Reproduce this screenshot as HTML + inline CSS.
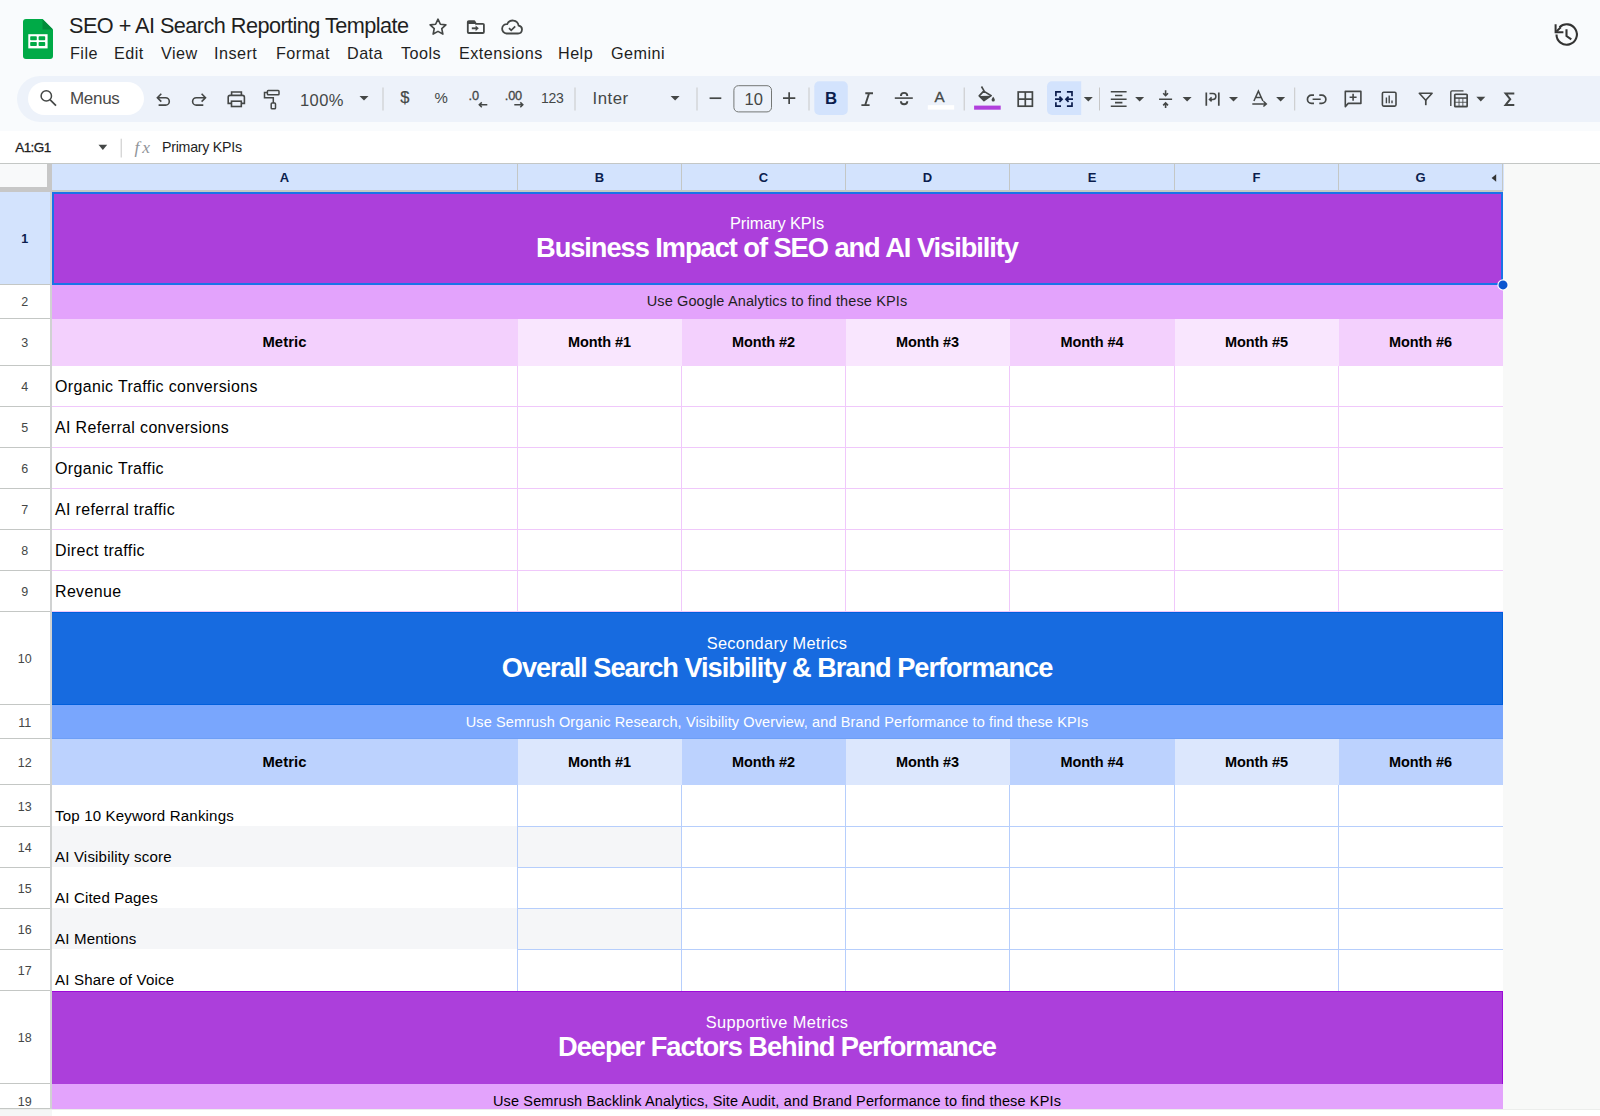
<!DOCTYPE html>
<html><head><meta charset="utf-8"><style>
html,body{margin:0;padding:0}
body{width:1600px;height:1116px;overflow:hidden;position:relative;background:#f8f9fa;font-family:'Liberation Sans', sans-serif}
.t{position:absolute;white-space:nowrap;line-height:1}
.r{position:absolute}
</style></head><body>
<div class="r" style="left:0px;top:0px;width:1600px;height:131px;background:#f9fbfd;"></div><svg class="r" style="left:23px;top:19px" width="30" height="40" viewBox="0 0 30 40">
<path d="M3 0 H19.5 L30 10.5 V37 A3 3 0 0 1 27 40 H3 A3 3 0 0 1 0 37 V3 A3 3 0 0 1 3 0Z" fill="#00aa47"/>
<path d="M19.5 0 L30 10.5 H19.5Z" fill="#008c3a"/>
<rect x="5.3" y="15.2" width="19.3" height="14.2" fill="#fff"/>
<rect x="7.2" y="17.3" width="6.6" height="4" rx="0.8" fill="#00aa47"/>
<rect x="15.6" y="17.3" width="6.6" height="4" rx="0.8" fill="#00aa47"/>
<rect x="7.2" y="23" width="6.6" height="4" rx="0.8" fill="#00aa47"/>
<rect x="15.6" y="23" width="6.6" height="4" rx="0.8" fill="#00aa47"/>
</svg><div class="t" style="left:69px;top:15.36px;font-size:21.7px;color:#1f1f1f;font-weight:normal;letter-spacing:-0.55px;">SEO + AI Search Reporting Template</div><svg class="r" style="left:427px;top:16px" width="22" height="22" viewBox="0 0 24 24"><path d="M12 3.5l2.6 5.5 6 .7-4.5 4.1 1.2 5.9L12 16.8l-5.3 2.9 1.2-5.9L3.4 9.7l6-.7z" fill="none" stroke="#444746" stroke-width="1.8" stroke-linejoin="round"/></svg><svg class="r" style="left:464px;top:16px" width="24" height="22" viewBox="0 0 24 22"><path d="M3.8 6.1A1 1 0 0 1 4.8 5.1H10.2L12 7.9H18.9A1 1 0 0 1 19.9 8.9V16A1 1 0 0 1 18.9 17H4.8A1 1 0 0 1 3.8 16Z" fill="none" stroke="#444746" stroke-width="1.8" stroke-linejoin="round"/><path d="M3.8 5.1H10.2L12 7.9H3.8Z" fill="#444746"/><path d="M7.8 12.3H12.8" stroke="#444746" stroke-width="1.9"/><path d="M11.6 9.4L14.8 12.3L11.6 15.2Z" fill="#444746"/></svg><svg class="r" style="left:500px;top:16px" width="24" height="22" viewBox="0 0 24 22"><path d="M6.5 17.5H18a4 4 0 0 0 .6-7.95A6 6 0 0 0 7.2 8.1 4.7 4.7 0 0 0 6.5 17.5Z" fill="none" stroke="#444746" stroke-width="1.8"/><path d="M9 12.2l2.2 2.2 4-4" fill="none" stroke="#444746" stroke-width="1.7"/></svg><svg class="r" style="left:1553px;top:21px" width="27" height="27" viewBox="0 0 27 27"><path d="M3.5 13.5A10.2 10.2 0 1 0 6.5 6.3" fill="none" stroke="#333" stroke-width="2.1"/><path d="M2.6 3.2V11.3H10.4" fill="none" stroke="#333" stroke-width="2"/><path d="M3.4 10.5L7.8 6.3" stroke="#333" stroke-width="2"/><path d="M13.5 8.2V15L18.3 18.3" fill="none" stroke="#333" stroke-width="2.1"/></svg><div class="t" style="left:70px;top:45.03px;font-size:16.2px;color:#1f1f1f;font-weight:normal;letter-spacing:0.45px;">File</div><div class="t" style="left:114px;top:45.03px;font-size:16.2px;color:#1f1f1f;font-weight:normal;letter-spacing:0.45px;">Edit</div><div class="t" style="left:161px;top:45.03px;font-size:16.2px;color:#1f1f1f;font-weight:normal;letter-spacing:0.45px;">View</div><div class="t" style="left:214px;top:45.03px;font-size:16.2px;color:#1f1f1f;font-weight:normal;letter-spacing:0.45px;">Insert</div><div class="t" style="left:276px;top:45.03px;font-size:16.2px;color:#1f1f1f;font-weight:normal;letter-spacing:0.45px;">Format</div><div class="t" style="left:347px;top:45.03px;font-size:16.2px;color:#1f1f1f;font-weight:normal;letter-spacing:0.45px;">Data</div><div class="t" style="left:401px;top:45.03px;font-size:16.2px;color:#1f1f1f;font-weight:normal;letter-spacing:0.45px;">Tools</div><div class="t" style="left:459px;top:45.03px;font-size:16.2px;color:#1f1f1f;font-weight:normal;letter-spacing:0.45px;">Extensions</div><div class="t" style="left:558px;top:45.03px;font-size:16.2px;color:#1f1f1f;font-weight:normal;letter-spacing:0.45px;">Help</div><div class="t" style="left:611px;top:45.03px;font-size:16.2px;color:#1f1f1f;font-weight:normal;letter-spacing:0.45px;">Gemini</div><div class="r" style="left:17px;top:76px;width:1700px;height:46px;background:#edf2fa;border-radius:23px;"></div><div class="r" style="left:28px;top:82px;width:116px;height:33px;background:#ffffff;border-radius:17px;"></div><svg class="r" style="left:0;top:0" width="1600" height="131" viewBox="0 0 1600 131"><circle cx="46.3" cy="95.9" r="5.2" fill="none" stroke="#444746" stroke-width="1.5"/><path d="M50 99.7L56 105.6" stroke="#444746" stroke-width="1.7"/><path d="M161.3 93.8L157.4 97.7L161.3 101.6M157.6 97.7H165.6A3.7 3.7 0 0 1 165.6 105.1H158.6" fill="none" stroke="#444746" stroke-width="1.6"/><path d="M201.6 93.8L205.5 97.7L201.6 101.6M205.3 97.7H196.3A3.7 3.7 0 0 0 196.3 105.1H203.3" fill="none" stroke="#444746" stroke-width="1.6"/><path d="M231.6 95.2V92H241.4V95.2" fill="none" stroke="#444746" stroke-width="1.6"/><path d="M231.4 103.4H228.2V97.3A1.9 1.9 0 0 1 230.1 95.4H242.5A1.9 1.9 0 0 1 244.4 97.3V103.4H241.2" fill="none" stroke="#444746" stroke-width="1.6"/><rect x="231.5" y="101.2" width="9.8" height="5.3" fill="none" stroke="#444746" stroke-width="1.6"/><rect x="267.4" y="90.6" width="11.6" height="4.2" rx="0.8" fill="none" stroke="#444746" stroke-width="1.5"/><path d="M267.2 92.6H264.5V97.8H273.3V102.9" fill="none" stroke="#444746" stroke-width="1.5"/><rect x="271.2" y="103" width="4.3" height="5.8" rx="0.9" fill="none" stroke="#444746" stroke-width="1.5"/><path d="M359.5 96H368.5L364.0 100.6Z" fill="#444746"/><rect x="382.5" y="87.5" width="1" height="23" fill="#c7c7c7"/><rect x="574.5" y="87.5" width="1" height="23" fill="#c7c7c7"/><path d="M670.6 96H679.6L675.1 100.6Z" fill="#444746"/><rect x="696.5" y="87.5" width="1" height="23" fill="#c7c7c7"/><path d="M709.6 98.2H721.3" stroke="#444746" stroke-width="1.7"/><rect x="733.9" y="85.7" width="37.6" height="26.2" rx="4.5" fill="none" stroke="#747775" stroke-width="1"/><path d="M783 98.2H795.3M789.15 92.3V104.1" stroke="#444746" stroke-width="1.7"/><rect x="808.5" y="87.5" width="1" height="23" fill="#c7c7c7"/><rect x="814.3" y="81.3" width="33.5" height="33.7" rx="5" fill="#d3e3fd"/><path d="M865.3 93.3H873M861.4 105.1H869.6M869 93.5L865.3 104.8" fill="none" stroke="#444746" stroke-width="1.9"/><path d="M894.8 98.1H912.8" stroke="#444746" stroke-width="1.6"/><path d="M900.9 95.9A3.2 3 0 0 1 907.3 95.9M900.9 101.2A3.2 3.1 0 0 0 907.3 101.2" fill="none" stroke="#444746" stroke-width="1.9"/><rect x="927.8" y="105.2" width="26.4" height="4.4" fill="#ffffff"/><rect x="963.7" y="87.5" width="1" height="23" fill="#c7c7c7"/><path d="M981.5 86.5L984.2 91.1" stroke="#444746" stroke-width="1.6"/><path d="M979.2 95.9L983.7 91.1L991.2 95.7L984 100.6Z" fill="none" stroke="#444746" stroke-width="1.6" stroke-linejoin="round"/><path d="M979.2 95.9L991.2 95.7L984 100.6Z" fill="#444746"/><path d="M993.2 96.8C992 98.5 991.6 99.2 991.6 99.9A1.6 1.6 0 0 0 994.8 99.9C994.8 99.2 994.4 98.5 993.2 96.8Z" fill="#444746"/><rect x="974.1" y="105.6" width="26.6" height="4.1" fill="#b03fdc"/><rect x="1018.2" y="92" width="14.2" height="14.2" fill="none" stroke="#444746" stroke-width="1.7"/><path d="M1025.3 92V106.2M1018.2 99.1H1032.4" stroke="#444746" stroke-width="1.7"/><path d="M1052 81.3H1081.2V115H1052A5 5 0 0 1 1047 110V86.3A5 5 0 0 1 1052 81.3Z" fill="#d3e3fd"/><path d="M1061 91.9H1055.9V96.2M1055.9 102.2V106.2H1061M1066.9 91.9H1072V96.2M1072 102.2V106.2H1066.9" fill="none" stroke="#0b1d4d" stroke-width="1.7"/><path d="M1055 99.2H1061.8M1059.4 96.6L1062 99.2L1059.4 101.8M1073 99.2H1066.2M1068.6 96.6L1066 99.2L1068.6 101.8" fill="none" stroke="#0b1d4d" stroke-width="1.8"/><path d="M1083.8 97H1092.8L1088.3 101.6Z" fill="#444746"/><rect x="1099.0" y="87.5" width="1" height="23" fill="#c7c7c7"/><path d="M1110.8 91.7H1126.6M1115 95.5H1122.4M1110.8 99.2H1126.6M1115 102.6H1122.4M1110.8 106.2H1126.6" stroke="#444746" stroke-width="1.6"/><path d="M1135.1 97H1144.1L1139.6 101.6Z" fill="#444746"/><path d="M1159.1 99.3H1172.1M1165.6 90.2V95.6M1163.2 93.2L1165.6 95.7L1168 93.2M1165.6 108V102.9M1163.2 105.4L1165.6 102.9L1168 105.4" fill="none" stroke="#444746" stroke-width="1.6"/><path d="M1182.6 97H1191.6L1187.1 101.6Z" fill="#444746"/><path d="M1206.3 92.4V105.8M1218.8 92.4V105.8" stroke="#444746" stroke-width="1.7"/><path d="M1209.5 93.6H1213A2.9 2.9 0 0 1 1213 99.4H1209.8M1211.6 97.4L1209.5 99.4L1211.6 101.4" fill="none" stroke="#444746" stroke-width="1.5"/><path d="M1229 97H1238L1233.5 101.6Z" fill="#444746"/><path d="M1253.9 101L1258.4 91.1L1262.9 101M1255.5 97.6H1261.3" fill="none" stroke="#444746" stroke-width="1.5"/><path d="M1252.3 103.9H1266.2M1263.4 101.3L1266.3 103.9L1263.4 106.5" fill="none" stroke="#444746" stroke-width="1.5"/><path d="M1276.1 97H1285.1L1280.6 101.6Z" fill="#444746"/><rect x="1294.2" y="87.5" width="1" height="23" fill="#c7c7c7"/><path d="M1314 95.2H1311.5A4.05 4.05 0 0 0 1311.5 103.3H1314M1319.3 95.2H1321.8A4.05 4.05 0 0 1 1321.8 103.3H1319.3M1312.6 99.25H1320.7" fill="none" stroke="#444746" stroke-width="1.7"/><path d="M1345.3 106.6V91.4H1360.9V103.4H1348.2Z" fill="none" stroke="#444746" stroke-width="1.6" stroke-linejoin="round"/><path d="M1353.1 93.7V100.7M1349.6 97.2H1356.6" stroke="#444746" stroke-width="1.6"/><rect x="1382.4" y="92.3" width="13.6" height="13.8" rx="1.3" fill="none" stroke="#444746" stroke-width="1.6"/><path d="M1386.4 97.6V103.2M1389.2 95.4V103.2M1392 100.4V103.2" stroke="#444746" stroke-width="1.4"/><path d="M1419.3 93.3H1432.1L1425.7 100.3Z" fill="none" stroke="#444746" stroke-width="1.6" stroke-linejoin="round"/><path d="M1425.8 99.5V105.2" stroke="#444746" stroke-width="1.7"/><path d="M1450.8 106V92.1A1.3 1.3 0 0 1 1452 90.9H1463.5" fill="none" stroke="#444746" stroke-width="1.4"/><rect x="1453.9" y="93.4" width="14.1" height="14.1" rx="1.6" fill="#444746"/><rect x="1455.6" y="95.1" width="10.7" height="2.2" fill="#edf2fa"/><rect x="1455.6" y="98.8" width="3" height="3" fill="#edf2fa"/><rect x="1455.6" y="102.65" width="3" height="3" fill="#edf2fa"/><rect x="1459.45" y="98.8" width="3" height="3" fill="#edf2fa"/><rect x="1459.45" y="102.65" width="3" height="3" fill="#edf2fa"/><rect x="1463.3" y="98.8" width="3" height="3" fill="#edf2fa"/><rect x="1463.3" y="102.65" width="3" height="3" fill="#edf2fa"/><path d="M1476.3 96.8H1485.3L1480.8 101.39999999999999Z" fill="#444746"/><path d="M1514.3 93.4H1505.6L1510.2 99.2L1505.6 104.9H1514.3" fill="none" stroke="#444746" stroke-width="2"/></svg><div class="t" style="left:70px;top:90.35px;font-size:17px;color:#4a4a4a;font-weight:normal;letter-spacing:-0.3px;">Menus</div><div class="t" style="left:300px;top:91.57px;font-size:16.5px;color:#444746;font-weight:normal;letter-spacing:0.4px;">100%</div><div class="t" style="left:400.3px;top:89.37px;font-size:16.5px;color:#444746;font-weight:normal;letter-spacing:0px;-webkit-text-stroke:0.2px #444746;">$</div><div class="t" style="left:434.5px;top:90.25px;font-size:15px;color:#444746;font-weight:normal;letter-spacing:0px;">%</div><div class="t" style="left:468.6px;top:89.92px;font-size:12.8px;color:#444746;font-weight:normal;letter-spacing:-0.2px;-webkit-text-stroke:0.3px #444746;">.0</div><svg class="r" style="left:0;top:0" width="1600" height="131" viewBox="0 0 1600 131"><path d="M487.3 104.8H479.3M481.8 102.4L479.3 104.8L481.8 107.2M514.3 104.8H522.8M520.3 102.4L522.8 104.8L520.3 107.2" fill="none" stroke="#444746" stroke-width="1.5"/></svg><div class="t" style="left:504.8px;top:89.92px;font-size:12.8px;color:#444746;font-weight:normal;letter-spacing:-0.2px;-webkit-text-stroke:0.3px #444746;">.00</div><div class="t" style="left:541px;top:91.30px;font-size:14px;color:#444746;font-weight:normal;letter-spacing:-0.3px;">123</div><div class="t" style="left:592.5px;top:91.12px;font-size:16.8px;color:#444746;font-weight:normal;letter-spacing:0.5px;">Inter</div><div class="t" style="left:744.5px;top:90.77px;font-size:16.5px;color:#444746;font-weight:normal;letter-spacing:0px;">10</div><div class="t" style="left:825px;top:91.12px;font-size:16.8px;color:#0b1d4d;font-weight:bold;letter-spacing:0px;">B</div><div class="t" style="left:934.6px;top:89.28px;font-size:15.2px;color:#444746;font-weight:normal;letter-spacing:0px;-webkit-text-stroke:0.3px #444746;">A</div><div class="r" style="left:0px;top:131px;width:1600px;height:32px;background:#ffffff;"></div><div class="t" style="left:15.2px;top:140.73px;font-size:13.5px;color:#1f1f1f;font-weight:normal;letter-spacing:-0.55px;-webkit-text-stroke:0.3px #1f1f1f;">A1:G1</div><svg class="r" style="left:0;top:131px" width="200" height="32" viewBox="0 131 200 32"><path d="M98.5 144.7H107.2L102.85 150Z" fill="#444746"/><rect x="120.7" y="138.7" width="1" height="18.8" fill="#c7c7c7"/></svg><div class="t" style="left:134.5px;top:138.73px;font-size:17.5px;color:#8f9499;font-weight:normal;letter-spacing:0px;font-family:'Liberation Serif',serif;letter-spacing:3px;"><i>fx</i></div><div class="t" style="left:162px;top:140.23px;font-size:14.2px;color:#1f1f1f;font-weight:normal;letter-spacing:-0.25px;">Primary KPIs</div><div class="r" style="left:0px;top:163px;width:1600px;height:1px;background:#c4c7c5;"></div><div class="r" style="left:0px;top:164px;width:1600px;height:952px;background:#f8f9f8;"></div><div class="r" style="left:0px;top:164px;width:47px;height:23px;background:#f8f9fa;"></div><div class="r" style="left:47px;top:164px;width:5px;height:28px;background:#c7c7c7;"></div><div class="r" style="left:0px;top:187px;width:52px;height:5px;background:#c7c7c7;"></div><div class="r" style="left:52px;top:164px;width:1452px;height:27px;background:#d3e3fd;"></div><div class="r" style="left:52px;top:190px;width:1451px;height:2px;background:#c4c7c5;"></div><div class="r" style="left:517px;top:164px;width:1px;height:27px;background:#c4c7c5;"></div><div class="t" style="left:-315.5px;width:1200px;text-align:center;top:171.35px;font-size:13px;color:#0b1d4d;font-weight:bold;letter-spacing:0px;">A</div><div class="r" style="left:681px;top:164px;width:1px;height:27px;background:#c4c7c5;"></div><div class="t" style="left:-0.5px;width:1200px;text-align:center;top:171.35px;font-size:13px;color:#0b1d4d;font-weight:bold;letter-spacing:0px;">B</div><div class="r" style="left:845px;top:164px;width:1px;height:27px;background:#c4c7c5;"></div><div class="t" style="left:163.5px;width:1200px;text-align:center;top:171.35px;font-size:13px;color:#0b1d4d;font-weight:bold;letter-spacing:0px;">C</div><div class="r" style="left:1009px;top:164px;width:1px;height:27px;background:#c4c7c5;"></div><div class="t" style="left:327.5px;width:1200px;text-align:center;top:171.35px;font-size:13px;color:#0b1d4d;font-weight:bold;letter-spacing:0px;">D</div><div class="r" style="left:1174px;top:164px;width:1px;height:27px;background:#c4c7c5;"></div><div class="t" style="left:492.0px;width:1200px;text-align:center;top:171.35px;font-size:13px;color:#0b1d4d;font-weight:bold;letter-spacing:0px;">E</div><div class="r" style="left:1338px;top:164px;width:1px;height:27px;background:#c4c7c5;"></div><div class="t" style="left:656.5px;width:1200px;text-align:center;top:171.35px;font-size:13px;color:#0b1d4d;font-weight:bold;letter-spacing:0px;">F</div><div class="r" style="left:1502px;top:164px;width:1px;height:27px;background:#c4c7c5;"></div><div class="t" style="left:820.5px;width:1200px;text-align:center;top:171.35px;font-size:13px;color:#0b1d4d;font-weight:bold;letter-spacing:0px;">G</div><svg class="r" style="left:1490px;top:173px" width="8" height="10" viewBox="0 0 8 10"><path d="M6.2 1.3V8.7L1.6 5Z" fill="#333"/></svg><div class="r" style="left:0px;top:192px;width:50px;height:924px;background:#ffffff;"></div><div class="r" style="left:50px;top:192px;width:2px;height:924px;background:#d0d2d2;"></div><div class="r" style="left:0px;top:192px;width:50px;height:92px;background:#d3e3fd;"></div><div class="r" style="left:0px;top:284px;width:50px;height:1px;background:#c4c7c5;"></div><div class="t" style="left:-575.2px;width:1200px;text-align:center;top:232.88px;font-size:12.5px;color:#0b1d4d;font-weight:bold;letter-spacing:0px;">1</div><div class="r" style="left:0px;top:318px;width:50px;height:1px;background:#c4c7c5;"></div><div class="t" style="left:-575.2px;width:1200px;text-align:center;top:295.88px;font-size:12.5px;color:#444746;font-weight:normal;letter-spacing:0px;">2</div><div class="r" style="left:0px;top:365px;width:50px;height:1px;background:#c4c7c5;"></div><div class="t" style="left:-575.2px;width:1200px;text-align:center;top:337.38px;font-size:12.5px;color:#444746;font-weight:normal;letter-spacing:0px;">3</div><div class="r" style="left:0px;top:406px;width:50px;height:1px;background:#c4c7c5;"></div><div class="t" style="left:-575.2px;width:1200px;text-align:center;top:381.38px;font-size:12.5px;color:#444746;font-weight:normal;letter-spacing:0px;">4</div><div class="r" style="left:0px;top:447px;width:50px;height:1px;background:#c4c7c5;"></div><div class="t" style="left:-575.2px;width:1200px;text-align:center;top:422.38px;font-size:12.5px;color:#444746;font-weight:normal;letter-spacing:0px;">5</div><div class="r" style="left:0px;top:488px;width:50px;height:1px;background:#c4c7c5;"></div><div class="t" style="left:-575.2px;width:1200px;text-align:center;top:463.38px;font-size:12.5px;color:#444746;font-weight:normal;letter-spacing:0px;">6</div><div class="r" style="left:0px;top:529px;width:50px;height:1px;background:#c4c7c5;"></div><div class="t" style="left:-575.2px;width:1200px;text-align:center;top:504.38px;font-size:12.5px;color:#444746;font-weight:normal;letter-spacing:0px;">7</div><div class="r" style="left:0px;top:570px;width:50px;height:1px;background:#c4c7c5;"></div><div class="t" style="left:-575.2px;width:1200px;text-align:center;top:545.38px;font-size:12.5px;color:#444746;font-weight:normal;letter-spacing:0px;">8</div><div class="r" style="left:0px;top:611px;width:50px;height:1px;background:#c4c7c5;"></div><div class="t" style="left:-575.2px;width:1200px;text-align:center;top:586.38px;font-size:12.5px;color:#444746;font-weight:normal;letter-spacing:0px;">9</div><div class="r" style="left:0px;top:704px;width:50px;height:1px;background:#c4c7c5;"></div><div class="t" style="left:-575.2px;width:1200px;text-align:center;top:653.38px;font-size:12.5px;color:#444746;font-weight:normal;letter-spacing:0px;">10</div><div class="r" style="left:0px;top:738px;width:50px;height:1px;background:#c4c7c5;"></div><div class="t" style="left:-575.2px;width:1200px;text-align:center;top:716.88px;font-size:12.5px;color:#444746;font-weight:normal;letter-spacing:0px;">11</div><div class="r" style="left:0px;top:784px;width:50px;height:1px;background:#c4c7c5;"></div><div class="t" style="left:-575.2px;width:1200px;text-align:center;top:756.88px;font-size:12.5px;color:#444746;font-weight:normal;letter-spacing:0px;">12</div><div class="r" style="left:0px;top:826px;width:50px;height:1px;background:#c4c7c5;"></div><div class="t" style="left:-575.2px;width:1200px;text-align:center;top:800.88px;font-size:12.5px;color:#444746;font-weight:normal;letter-spacing:0px;">13</div><div class="r" style="left:0px;top:867px;width:50px;height:1px;background:#c4c7c5;"></div><div class="t" style="left:-575.2px;width:1200px;text-align:center;top:842.38px;font-size:12.5px;color:#444746;font-weight:normal;letter-spacing:0px;">14</div><div class="r" style="left:0px;top:908px;width:50px;height:1px;background:#c4c7c5;"></div><div class="t" style="left:-575.2px;width:1200px;text-align:center;top:883.38px;font-size:12.5px;color:#444746;font-weight:normal;letter-spacing:0px;">15</div><div class="r" style="left:0px;top:949px;width:50px;height:1px;background:#c4c7c5;"></div><div class="t" style="left:-575.2px;width:1200px;text-align:center;top:924.38px;font-size:12.5px;color:#444746;font-weight:normal;letter-spacing:0px;">16</div><div class="r" style="left:0px;top:990px;width:50px;height:1px;background:#c4c7c5;"></div><div class="t" style="left:-575.2px;width:1200px;text-align:center;top:965.38px;font-size:12.5px;color:#444746;font-weight:normal;letter-spacing:0px;">17</div><div class="r" style="left:0px;top:1083px;width:50px;height:1px;background:#c4c7c5;"></div><div class="t" style="left:-575.2px;width:1200px;text-align:center;top:1032.38px;font-size:12.5px;color:#444746;font-weight:normal;letter-spacing:0px;">18</div><div class="r" style="left:0px;top:1108px;width:50px;height:1px;background:#c4c7c5;"></div><div class="t" style="left:-575.2px;width:1200px;text-align:center;top:1096.38px;font-size:12.5px;color:#444746;font-weight:normal;letter-spacing:0px;">19</div><div class="r" style="left:0px;top:1109px;width:1600px;height:1px;background:#eceeec;"></div><div class="r" style="left:0px;top:1110px;width:52px;height:6px;background:#f5f6f6;"></div><div class="r" style="left:52px;top:1110px;width:1548px;height:6px;background:#ffffff;"></div><div class="r" style="left:52px;top:192px;width:1451px;height:93px;background:#ac3fdb;"></div><div class="r" style="left:52px;top:285px;width:1451px;height:34px;background:#e3a3fc;"></div><div class="r" style="left:52px;top:319px;width:466px;height:47px;background:#f3d0fd;"></div><div class="r" style="left:518px;top:319px;width:164px;height:47px;background:#f9e6fe;"></div><div class="r" style="left:682px;top:319px;width:164px;height:47px;background:#f3d0fd;"></div><div class="r" style="left:846px;top:319px;width:164px;height:47px;background:#f9e6fe;"></div><div class="r" style="left:1010px;top:319px;width:165px;height:47px;background:#f3d0fd;"></div><div class="r" style="left:1175px;top:319px;width:164px;height:47px;background:#f9e6fe;"></div><div class="r" style="left:1339px;top:319px;width:164px;height:47px;background:#f3d0fd;"></div><div class="r" style="left:52px;top:366px;width:1451px;height:41px;background:#ffffff;"></div><div class="r" style="left:52px;top:406px;width:1451px;height:1px;background:#f0c8fb;"></div><div class="r" style="left:52px;top:407px;width:1451px;height:41px;background:#ffffff;"></div><div class="r" style="left:52px;top:447px;width:1451px;height:1px;background:#f0c8fb;"></div><div class="r" style="left:52px;top:448px;width:1451px;height:41px;background:#ffffff;"></div><div class="r" style="left:52px;top:488px;width:1451px;height:1px;background:#f0c8fb;"></div><div class="r" style="left:52px;top:489px;width:1451px;height:41px;background:#ffffff;"></div><div class="r" style="left:52px;top:529px;width:1451px;height:1px;background:#f0c8fb;"></div><div class="r" style="left:52px;top:530px;width:1451px;height:41px;background:#ffffff;"></div><div class="r" style="left:52px;top:570px;width:1451px;height:1px;background:#f0c8fb;"></div><div class="r" style="left:52px;top:571px;width:1451px;height:41px;background:#ffffff;"></div><div class="r" style="left:52px;top:611px;width:1451px;height:1px;background:#f0c8fb;"></div><div class="r" style="left:517px;top:366px;width:1px;height:246px;background:#f0c8fb;"></div><div class="r" style="left:681px;top:366px;width:1px;height:246px;background:#f0c8fb;"></div><div class="r" style="left:845px;top:366px;width:1px;height:246px;background:#f0c8fb;"></div><div class="r" style="left:1009px;top:366px;width:1px;height:246px;background:#f0c8fb;"></div><div class="r" style="left:1174px;top:366px;width:1px;height:246px;background:#f0c8fb;"></div><div class="r" style="left:1338px;top:366px;width:1px;height:246px;background:#f0c8fb;"></div><div class="r" style="left:52px;top:612px;width:1451px;height:93px;background:#176be0;"></div><div class="r" style="left:52px;top:705px;width:1451px;height:34px;background:#79a6fd;"></div><div class="r" style="left:52px;top:738px;width:1451px;height:1px;background:#6e9ff6;"></div><div class="r" style="left:52px;top:612px;width:1451px;height:1px;background:#005fdc;"></div><div class="r" style="left:52px;top:704px;width:1451px;height:1px;background:#005fdc;"></div><div class="r" style="left:1502px;top:612px;width:1px;height:93px;background:#005fdc;"></div><div class="r" style="left:52px;top:739px;width:466px;height:46px;background:#bcd2fe;"></div><div class="r" style="left:518px;top:739px;width:164px;height:46px;background:#dce7fd;"></div><div class="r" style="left:682px;top:739px;width:164px;height:46px;background:#bcd2fe;"></div><div class="r" style="left:846px;top:739px;width:164px;height:46px;background:#dce7fd;"></div><div class="r" style="left:1010px;top:739px;width:165px;height:46px;background:#bcd2fe;"></div><div class="r" style="left:1175px;top:739px;width:164px;height:46px;background:#dce7fd;"></div><div class="r" style="left:1339px;top:739px;width:164px;height:46px;background:#bcd2fe;"></div><div class="r" style="left:52px;top:785px;width:1451px;height:42px;background:#ffffff;"></div><div class="r" style="left:518px;top:826px;width:985px;height:1px;background:#b6cefc;"></div><div class="r" style="left:52px;top:827px;width:1451px;height:41px;background:#ffffff;"></div><div class="r" style="left:52px;top:826px;width:466px;height:41px;background:#f5f6f8;"></div><div class="r" style="left:518px;top:827px;width:164px;height:41px;background:#f5f6f8;"></div><div class="r" style="left:518px;top:867px;width:985px;height:1px;background:#b6cefc;"></div><div class="r" style="left:52px;top:868px;width:1451px;height:41px;background:#ffffff;"></div><div class="r" style="left:518px;top:908px;width:985px;height:1px;background:#b6cefc;"></div><div class="r" style="left:52px;top:909px;width:1451px;height:41px;background:#ffffff;"></div><div class="r" style="left:52px;top:908px;width:466px;height:41px;background:#f5f6f8;"></div><div class="r" style="left:518px;top:909px;width:164px;height:41px;background:#f5f6f8;"></div><div class="r" style="left:518px;top:949px;width:985px;height:1px;background:#b6cefc;"></div><div class="r" style="left:52px;top:950px;width:1451px;height:41px;background:#ffffff;"></div><div class="r" style="left:517px;top:785px;width:1px;height:206px;background:#b6cefc;"></div><div class="r" style="left:681px;top:785px;width:1px;height:206px;background:#b6cefc;"></div><div class="r" style="left:845px;top:785px;width:1px;height:206px;background:#b6cefc;"></div><div class="r" style="left:1009px;top:785px;width:1px;height:206px;background:#b6cefc;"></div><div class="r" style="left:1174px;top:785px;width:1px;height:206px;background:#b6cefc;"></div><div class="r" style="left:1338px;top:785px;width:1px;height:206px;background:#b6cefc;"></div><div class="r" style="left:52px;top:991px;width:1451px;height:93px;background:#ac3fdb;"></div><div class="r" style="left:52px;top:1084px;width:1451px;height:25px;background:#e3a3fc;"></div><div class="r" style="left:52px;top:991px;width:1451px;height:1px;background:#9d0ad8;"></div><div class="r" style="left:1502px;top:991px;width:1px;height:93px;background:#9d0ad8;"></div><div class="r" style="left:52px;top:192px;width:1451px;height:2px;background:#1a73e8;"></div><div class="r" style="left:52px;top:283px;width:1451px;height:2px;background:#1a73e8;"></div><div class="r" style="left:52px;top:192px;width:2px;height:93px;background:#1a73e8;"></div><div class="r" style="left:1501px;top:192px;width:2px;height:93px;background:#1a73e8;"></div><svg class="r" style="left:1495px;top:277px" width="16" height="16" viewBox="0 0 16 16"><circle cx="8" cy="7.9" r="5.6" fill="#ffffff"/><circle cx="8" cy="7.9" r="4.5" fill="#0b57d0"/></svg><div class="t" style="left:177.0px;width:1200px;text-align:center;top:215.18px;font-size:16.38px;color:#ffffff;font-weight:normal;letter-spacing:-0.13px;">Primary KPIs</div><div class="t" style="left:177.0px;width:1200px;text-align:center;top:233.94px;font-size:27.25px;color:#ffffff;font-weight:bold;letter-spacing:-1.05px;">Business Impact of SEO and AI Visibility</div><div class="t" style="left:177.0px;width:1200px;text-align:center;top:635.18px;font-size:16.38px;color:#ffffff;font-weight:normal;letter-spacing:0.3px;">Secondary Metrics</div><div class="t" style="left:177.0px;width:1200px;text-align:center;top:653.94px;font-size:27.25px;color:#ffffff;font-weight:bold;letter-spacing:-1.05px;">Overall Search Visibility &amp; Brand Performance</div><div class="t" style="left:177.0px;width:1200px;text-align:center;top:1014.18px;font-size:16.38px;color:#ffffff;font-weight:normal;letter-spacing:0.4px;">Supportive Metrics</div><div class="t" style="left:177.0px;width:1200px;text-align:center;top:1032.94px;font-size:27.25px;color:#ffffff;font-weight:bold;letter-spacing:-1.05px;">Deeper Factors Behind Performance</div><div class="t" style="left:177.0px;width:1200px;text-align:center;top:293.78px;font-size:14.49px;color:#1f1f1f;font-weight:normal;letter-spacing:0.14px;">Use Google Analytics to find these KPIs</div><div class="t" style="left:177.0px;width:1200px;text-align:center;top:714.68px;font-size:14.49px;color:#ffffff;font-weight:normal;letter-spacing:0.12px;">Use Semrush Organic Research, Visibility Overview, and Brand Performance to find these KPIs</div><div class="t" style="left:177.0px;width:1200px;text-align:center;top:1093.88px;font-size:14.49px;color:#000000;font-weight:normal;letter-spacing:0.15px;">Use Semrush Backlink Analytics, Site Audit, and Brand Performance to find these KPIs</div><div class="t" style="left:-315.5px;width:1200px;text-align:center;top:334.92px;font-size:14.8px;color:#000000;font-weight:bold;letter-spacing:0.1px;">Metric</div><div class="t" style="left:-0.5px;width:1200px;text-align:center;top:335.18px;font-size:14.49px;color:#000000;font-weight:bold;letter-spacing:-0.1px;">Month #1</div><div class="t" style="left:163.5px;width:1200px;text-align:center;top:335.18px;font-size:14.49px;color:#000000;font-weight:bold;letter-spacing:-0.1px;">Month #2</div><div class="t" style="left:327.5px;width:1200px;text-align:center;top:335.18px;font-size:14.49px;color:#000000;font-weight:bold;letter-spacing:-0.1px;">Month #3</div><div class="t" style="left:492.0px;width:1200px;text-align:center;top:335.18px;font-size:14.49px;color:#000000;font-weight:bold;letter-spacing:-0.1px;">Month #4</div><div class="t" style="left:656.5px;width:1200px;text-align:center;top:335.18px;font-size:14.49px;color:#000000;font-weight:bold;letter-spacing:-0.1px;">Month #5</div><div class="t" style="left:820.5px;width:1200px;text-align:center;top:335.18px;font-size:14.49px;color:#000000;font-weight:bold;letter-spacing:-0.1px;">Month #6</div><div class="t" style="left:-315.5px;width:1200px;text-align:center;top:755.22px;font-size:14.8px;color:#000000;font-weight:bold;letter-spacing:0.1px;">Metric</div><div class="t" style="left:-0.5px;width:1200px;text-align:center;top:755.48px;font-size:14.49px;color:#000000;font-weight:bold;letter-spacing:-0.1px;">Month #1</div><div class="t" style="left:163.5px;width:1200px;text-align:center;top:755.48px;font-size:14.49px;color:#000000;font-weight:bold;letter-spacing:-0.1px;">Month #2</div><div class="t" style="left:327.5px;width:1200px;text-align:center;top:755.48px;font-size:14.49px;color:#000000;font-weight:bold;letter-spacing:-0.1px;">Month #3</div><div class="t" style="left:492.0px;width:1200px;text-align:center;top:755.48px;font-size:14.49px;color:#000000;font-weight:bold;letter-spacing:-0.1px;">Month #4</div><div class="t" style="left:656.5px;width:1200px;text-align:center;top:755.48px;font-size:14.49px;color:#000000;font-weight:bold;letter-spacing:-0.1px;">Month #5</div><div class="t" style="left:820.5px;width:1200px;text-align:center;top:755.48px;font-size:14.49px;color:#000000;font-weight:bold;letter-spacing:-0.1px;">Month #6</div><div class="t" style="left:55px;top:378.95px;font-size:15.94px;color:#000000;font-weight:normal;letter-spacing:0.37px;">Organic Traffic conversions</div><div class="t" style="left:55px;top:419.95px;font-size:15.94px;color:#000000;font-weight:normal;letter-spacing:0.37px;">AI Referral conversions</div><div class="t" style="left:55px;top:460.95px;font-size:15.94px;color:#000000;font-weight:normal;letter-spacing:0.37px;">Organic Traffic</div><div class="t" style="left:55px;top:501.95px;font-size:15.94px;color:#000000;font-weight:normal;letter-spacing:0.37px;">AI referral traffic</div><div class="t" style="left:55px;top:542.95px;font-size:15.94px;color:#000000;font-weight:normal;letter-spacing:0.37px;">Direct traffic</div><div class="t" style="left:55px;top:583.95px;font-size:15.94px;color:#000000;font-weight:normal;letter-spacing:0.37px;">Revenue</div><div class="t" style="left:55px;top:808.19px;font-size:15.07px;color:#000000;font-weight:normal;letter-spacing:0.17px;">Top 10 Keyword Rankings</div><div class="t" style="left:55px;top:849.19px;font-size:15.07px;color:#000000;font-weight:normal;letter-spacing:0.17px;">AI Visibility score</div><div class="t" style="left:55px;top:890.19px;font-size:15.07px;color:#000000;font-weight:normal;letter-spacing:0.17px;">AI Cited Pages</div><div class="t" style="left:55px;top:931.19px;font-size:15.07px;color:#000000;font-weight:normal;letter-spacing:0.17px;">AI Mentions</div><div class="t" style="left:55px;top:972.19px;font-size:15.07px;color:#000000;font-weight:normal;letter-spacing:0.17px;">AI Share of Voice</div>
</body></html>
